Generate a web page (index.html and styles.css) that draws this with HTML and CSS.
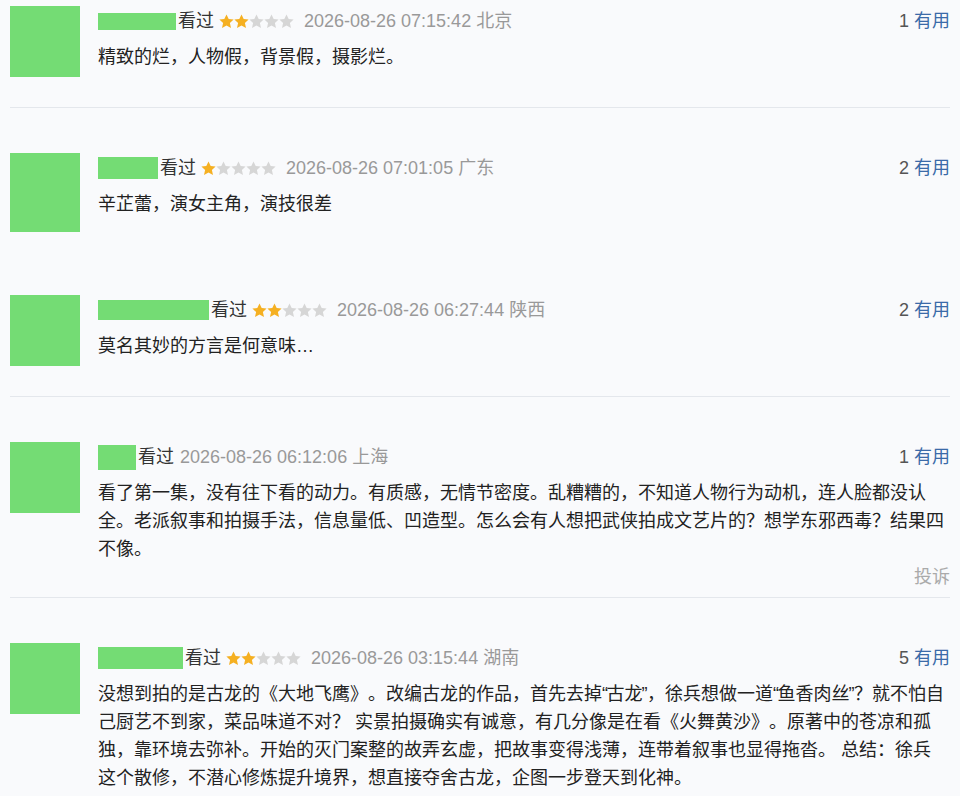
FILE: index.html
```html
<!DOCTYPE html>
<html lang="zh-CN">
  <head>
    <meta charset="utf-8">
    <title>短评</title>
    <link rel="stylesheet" href="styles.css">
  </head>
  <body>
    <svg width="0" height="0" class="defs">
      <symbol id="star" viewBox="0 0 15 15">
        <polygon points="7.5,0.6 9.7,5.1 14.6,5.6 10.9,9 12,13.9 7.5,11.4 3,13.9 4.1,9 0.4,5.6 5.3,5.1" />
      </symbol>
    </svg>
    <div class="comment-list">

      <div class="comment">
        <div class="avatar"></div>
        <div class="comment-body">
          <div class="comment-info">
            <span class="name-mask" style="width: 78px; height: 17px;"></span>
            <span class="verb">看过</span>
            <span class="stars">
              <svg class="star on"><use href="#star" /></svg><svg class="star on"><use href="#star" /></svg><svg class="star"><use href="#star" /></svg><svg class="star"><use href="#star" /></svg><svg class="star"><use href="#star" /></svg>
            </span>
            <span class="date">2026-08-26 07:15:42 北京</span>
            <span class="votes">1 <a href="#">有用</a></span>
          </div>
          <p class="comment-text">精致的烂，人物假，背景假，摄影烂。</p>
        </div>
      </div>

      <div class="comment no-rule">
        <div class="avatar avatar-tall"></div>
        <div class="comment-body">
          <div class="comment-info">
            <span class="name-mask" style="width: 60px; height: 22px;"></span>
            <span class="verb">看过</span>
            <span class="stars">
              <svg class="star on"><use href="#star" /></svg><svg class="star"><use href="#star" /></svg><svg class="star"><use href="#star" /></svg><svg class="star"><use href="#star" /></svg><svg class="star"><use href="#star" /></svg>
            </span>
            <span class="date">2026-08-26 07:01:05 广东</span>
            <span class="votes">2 <a href="#">有用</a></span>
          </div>
          <p class="comment-text">辛芷蕾，演女主角，演技很差</p>
        </div>
      </div>

      <div class="comment">
        <div class="avatar"></div>
        <div class="comment-body">
          <div class="comment-info">
            <span class="name-mask" style="width: 111px; height: 20px;"></span>
            <span class="verb">看过</span>
            <span class="stars">
              <svg class="star on"><use href="#star" /></svg><svg class="star on"><use href="#star" /></svg><svg class="star"><use href="#star" /></svg><svg class="star"><use href="#star" /></svg><svg class="star"><use href="#star" /></svg>
            </span>
            <span class="date">2026-08-26 06:27:44 陕西</span>
            <span class="votes">2 <a href="#">有用</a></span>
          </div>
          <p class="comment-text">莫名其妙的方言是何意味…</p>
        </div>
      </div>

      <div class="comment comment-long">
        <div class="avatar"></div>
        <div class="comment-body">
          <div class="comment-info">
            <span class="name-mask" style="width: 38px; height: 25px;"></span>
            <span class="verb">看过</span>
            <span class="date">2026-08-26 06:12:06 上海</span>
            <span class="votes">1 <a href="#">有用</a></span>
          </div>
          <p class="comment-text">看了第一集，没有往下看的动力。有质感，无情节密度。乱糟糟的，不知道人物行为动机，连人脸都没认全。老派叙事和拍摄手法，信息量低、凹造型。怎么会有人想把武侠拍成文艺片的？想学东邪西毒？结果四不像。</p>
          <div class="comment-actions"><a href="#">投诉</a></div>
        </div>
      </div>

      <div class="comment no-rule">
        <div class="avatar"></div>
        <div class="comment-body">
          <div class="comment-info">
            <span class="name-mask" style="width: 85px; height: 22px;"></span>
            <span class="verb">看过</span>
            <span class="stars">
              <svg class="star on"><use href="#star" /></svg><svg class="star on"><use href="#star" /></svg><svg class="star"><use href="#star" /></svg><svg class="star"><use href="#star" /></svg><svg class="star"><use href="#star" /></svg>
            </span>
            <span class="date">2026-08-26 03:15:44 湖南</span>
            <span class="votes">5 <a href="#">有用</a></span>
          </div>
          <p class="comment-text">没想到拍的是古龙的《大地飞鹰》。改编古龙的作品，首先去掉<q>古龙</q>，徐兵想做一道<q>鱼香肉丝</q>？就不怕自己厨艺不到家，菜品味道不对？ 实景拍摄确实有诚意，有几分像是在看《火舞黄沙》。原著中的苍凉和孤独，靠环境去弥补。开始的灭门案整的故弄玄虚，把故事变得浅薄，连带着叙事也显得拖沓。 总结：徐兵这个散修，不潜心修炼提升境界，想直接夺舍古龙，企图一步登天到化神。</p>
        </div>
      </div>

    </div>
  </body>
</html>
```

FILE: styles.css
```css
:root {
  --bg-color: #f9fafc;
  --text-color: #222;
  --muted-color: #999;
  --link-color: #3b6aa8;
  --mask-color: #74dc74;
  --star-on: #f5b022;
  --star-off: #d6d6d6;
  --rule-color: #e4e7ec;
}
*,*:before,*:after { box-sizing: border-box; }
html, body {
  margin: 0;
  background-color: var(--bg-color);
}
body {
  font-family: "Liberation Sans", "Noto Sans CJK SC", sans-serif;
  font-size: 18px;
  color: var(--text-color);
  text-spacing-trim: space-all;
}
.defs {
  position: absolute;
  width: 0;
  height: 0;
}
a {
  color: var(--link-color);
  text-decoration: none;
}

.comment-list {
  padding: 0 10px;
}
.comment {
  display: grid;
  grid-template-columns: 70px 1fr;
  column-gap: 18px;
  align-items: start;
  padding: 45px 0 30px;
  border-bottom: 1px solid var(--rule-color);
}
.comment:first-child {
  padding-top: 6px;
}
.comment.no-rule {
  border-bottom-color: transparent;
  padding-bottom: 17px;
}
.comment.comment-long {
  padding-bottom: 6px;
}

.avatar {
  width: 70px;
  height: 71px;
  background-color: var(--mask-color);
}
.avatar.avatar-tall {
  height: 79px;
}

.comment-body {
  padding-top: 1px;
}
.comment-info {
  display: flex;
  align-items: center;
  height: 28px;
  line-height: 28px;
}
.name-mask {
  display: inline-block;
  background-color: var(--mask-color);
}
.verb {
  margin-left: 2px;
  color: #333;
}
.stars {
  display: inline-flex;
  margin-left: 5px;
}
.star {
  width: 15px;
  height: 15px;
  fill: var(--star-off);
}
.star.on {
  fill: var(--star-on);
}
.date {
  margin-left: 6px;
  color: var(--muted-color);
}
.stars + .date {
  margin-left: 10px;
}
.votes {
  margin-left: auto;
  color: #555;
}

.comment-text {
  margin: 8px 0 0;
  max-width: 849px;
  line-height: 28px;
}
.comment-text q {
  quotes: "“" "”";
}
.comment-text q::before,
.comment-text q::after {
  display: inline-block;
  width: 4.5px;
  font-family: "Liberation Sans", sans-serif;
}
.comment-text q::after {
  text-indent: -1px;
}
.comment-actions {
  text-align: right;
  line-height: 28px;
}
.comment-actions a {
  color: #aaa;
}
```
